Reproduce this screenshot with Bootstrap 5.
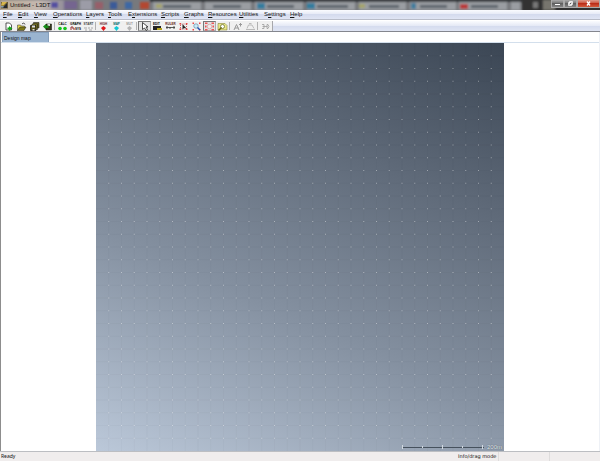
<!DOCTYPE html>
<html lang="en">
<head>
<meta charset="utf-8">
<meta name="viewport" content="width=device-width, initial-scale=1">
<title>Untitled - L3DT</title>
<link href="https://cdn.jsdelivr.net/npm/bootstrap@5.3.0/dist/css/bootstrap.min.css" rel="stylesheet">
<style>
body{font:5px/8px "Noto Sans","Open Sans",sans-serif;color:#111;background:#fff}
button{font:inherit;color:inherit;border:0;background:none;padding:0}
.caption{height:10px;background:#5a5b5e;overflow:hidden}
.caption-glass{left:0;top:0;width:100%;height:100%}
.caption-name{gap:2px;padding-left:1px}
.caption h1{font:6px/10px "Liberation Sans",Arial,sans-serif;color:#111}
.win-btn{height:8px;width:13px;border:1px solid #aaa;border-top:0;background:linear-gradient(#a9a9a9,#777 45%,#5f5f5f 50%,#858585);display:flex;align-items:center;justify-content:center}
.win-close{width:23px;background:linear-gradient(#dd9c8d,#cc5540 45%,#bb2d18 50%,#d25a3c)}
.menus{display:grid;grid-template-columns:15px 16px 19px 33px 22px 20px 33px 23px 24px 31px 25px 26px 20px;padding-left:3px;height:10px;background:linear-gradient(#fafbfe,#e6eaf6 45%,#d4dbee 50%,#e0e5f4);border-bottom:1px solid #b9bdc9}
.menus a{color:#111;text-decoration:none;font:6px/9px "Liberation Sans",Arial,sans-serif;white-space:nowrap}
.menus u{text-underline-offset:1px}
.tools{height:12px;background:linear-gradient(#fafbfe,#e6eaf6 45%,#d4dbee 50%,#e0e5f4);border-top:1px solid #fff;border-bottom:1px solid #84868e}
.strip{background:#f0f0f0;padding-left:2px;border-right:1px solid #a7a7ab}
.tool{width:13px;height:10px;display:flex;align-items:center;justify-content:center}
.tool svg{width:11px;height:9px;overflow:visible}
.tool text{font:bold 3px "Liberation Sans",Arial,sans-serif;text-anchor:middle}
.tool.pressed{background:#e2e2e2;border:1px solid #777;border-right-color:#aaa;border-bottom-color:#aaa}
.split{width:1px;height:8px;margin-right:1px;background:#b1b1b1}
.work{border-left:1px solid #8d8d8d;border-right:1px solid #eef1f6;min-height:0}
.tabs{height:11px;border-bottom:1px solid #d3dfec;padding-left:1px}
.map-tab{width:47px;background:#9ab4d0;border:1px solid #86a0bd;border-bottom:0;text-align:left;padding-left:1px;font-family:"Liberation Sans",Arial,sans-serif}
.canvas-area{min-height:0}
.design-map{height:100%;aspect-ratio:1;background:linear-gradient(204deg,#3b4654,#5f6a79 30%,#8490a0 62%,#bbc8d9)}
.tiles{width:100%;height:100%}
.scale-key{right:2px;bottom:1px;gap:3px;font:6px/6px "Liberation Sans",Arial,sans-serif;color:#e6ebf0;text-shadow:0 0 1px #26303b}
.scale-key svg{width:82px;height:6px}
.status{height:10px;background:#f0eded;border-top:1px solid #bcbec2;padding-left:1px}
.pane{width:51px;border-left:1px solid #dedcdc}
.mode{width:40px;font-family:"DejaVu Sans","Noto Sans",sans-serif;white-space:nowrap}
</style>
<script src="https://cdn.jsdelivr.net/npm/bootstrap@5.3.0/dist/js/bootstrap.bundle.min.js"></script>
</head>
<body class="d-flex flex-column vh-100 overflow-hidden m-0">
<header class="caption position-relative flex-shrink-0">
  <svg class="caption-glass position-absolute" viewBox="0 0 600 10" preserveAspectRatio="none" aria-hidden="true">
    <defs>
      <filter id="soft" x="-5%" y="-30%" width="110%" height="160%"><feGaussianBlur stdDeviation="1.3"/></filter>
      <linearGradient id="glow"><stop offset="0" stop-color="#b9a994"/><stop offset=".6" stop-color="#c5b8b0"/><stop offset="1" stop-color="#938f9a"/></linearGradient>
    </defs>
    <rect width="600" height="10" fill="#77797d"/>
    <g filter="url(#soft)">
      <rect width="64" height="12" fill="url(#glow)"/>
      <rect x="51" y="2" width="7" height="6" fill="#5450a0"/><rect x="64" y="1" width="13" height="8" fill="#756590"/>
      <rect x="80" width="12" height="10" fill="#9c9ca7"/><rect x="95" y="2" width="8" height="7" fill="#975f69"/>
      <rect x="110" y="2" width="7" height="7" fill="#3a5a99"/><rect x="125" y="2" width="7" height="7" fill="#3e68a4"/>
      <rect x="140" y="2" width="9" height="7" fill="#b34632"/>
      <g fill="#9a9da2"><rect x="153" y="2" width="48" height="8"/><rect x="205" y="2" width="46" height="8"/><rect x="255" y="2" width="48" height="8"/><rect x="307" y="2" width="48" height="8"/><rect x="359" y="2" width="47" height="8"/><rect x="410" y="2" width="46" height="8"/><rect x="459" y="2" width="48" height="8"/><rect x="511" y="2" width="9" height="8"/></g>
      <g fill="#5c636c"><rect x="163" y="5" width="28" height="3"/><rect x="213" y="5" width="28" height="3"/><rect x="267" y="5" width="27" height="3"/><rect x="317" y="5" width="31" height="3"/><rect x="369" y="5" width="30" height="3"/><rect x="420" y="5" width="27" height="3"/><rect x="471" y="5" width="27" height="3"/></g>
      <rect x="156" y="4" width="6" height="4" fill="#a6a56d"/><rect x="257" y="3" width="8" height="6" fill="#347d9e"/><rect x="307" y="3" width="8" height="6" fill="#347d9e"/><rect x="359" y="4" width="6" height="4" fill="#a6a56d"/><rect x="411" y="3" width="5" height="6" fill="#427d9d"/><rect x="460" y="4" width="8" height="5" fill="#b93a3a"/>
      <rect x="150" y="-2" width="372" height="4" fill="#34373b"/>
      <rect x="522" y="-2" width="80" height="14" fill="#333332"/><rect x="533" y="2" width="5" height="6" fill="#777"/><rect x="543" y="0" width="12" height="10" fill="#77756e"/>
    </g>
  </svg>
  <div class="position-relative d-flex justify-content-between">
    <div class="caption-name d-flex align-items-center">
      <svg width="7" height="8" viewBox="0 0 14 16" aria-hidden="true"><path fill="#665837" d="M0 2h14v13H0z"/><path fill="#d6b64c" d="M2 2h10L5 9H0z"/><path fill="#232730" d="m3 14 9-9v9z"/><path fill="#829db0" d="M0 10h5v3H0z"/></svg>
      <h1 class="m-0 text-nowrap">Untitled - L3DT</h1>
    </div>
    <div class="d-flex align-items-start">
      <button class="win-btn" aria-label="Minimize"><svg width="7" height="5"><path d="M1 3h5v1H1z" fill="#fff"/></svg></button>
      <button class="win-btn" aria-label="Restore"><svg width="7" height="5"><path d="M2.500.5h3v3h-3zM1.500 1.500h3v3h-3z" fill="none" stroke="#fff" stroke-width=".8"/></svg></button>
      <button class="win-btn win-close" aria-label="Close"><svg width="7" height="5"><path d="m2 .5 3 4m0-4-3 4" stroke="#fff" stroke-width="1.300"/></svg></button>
    </div>
  </div>
</header>
<nav class="menus flex-shrink-0" aria-label="Main menu">
  <a href="#"><u>F</u>ile</a><a href="#"><u>E</u>dit</a><a href="#"><u>V</u>iew</a><a href="#"><u>O</u>perations</a><a href="#"><u>L</u>ayers</a><a href="#"><u>T</u>ools</a><a href="#">E<u>x</u>tensions</a><a href="#"><u>S</u>cripts</a><a href="#"><u>G</u>raphs</a><a href="#"><u>R</u>esources</a><a href="#"><u>U</u>tilities</a><a href="#">S<u>e</u>ttings</a><a href="#"><u>H</u>elp</a>
</nav>
<div class="tools d-flex flex-shrink-0" role="toolbar" aria-label="Tools">
  <div class="strip d-flex align-items-center">
    <button class="tool" aria-label="New"><svg viewBox="0 0 22 18"><path d="M6 2h7l4 4v10H6z" fill="#fff" stroke="#222" stroke-width="1.500"/><path d="M12 8v3H9v4h3v3l7-5z" fill="#16a41c"/></svg></button>
    <button class="tool" aria-label="Open"><svg viewBox="0 0 22 18"><path d="M3 6h6l2 2h6v3H8l-5 6z" fill="#ddd24c" stroke="#333" stroke-width="1"/><path d="M8 10h12l-4 7H3z" fill="#7d7817" stroke="#222"/><path d="M12 4c3-3 5-2 6 1" fill="none" stroke="#222" stroke-width="1.500"/></svg></button>
    <button class="tool" aria-label="Save all"><svg viewBox="0 0 22 18"><path d="M9 1h11v11H9z" fill="#6b6722" stroke="#111"/><path d="M6 4h11v11H6z" fill="#8b862c" stroke="#111"/><path d="M3 7h11v10H3z" fill="#56521b" stroke="#111" stroke-width="1.500"/><path d="M6 7h6v4H6zM7 14h4v3H7z" fill="#ddd"/></svg></button>
    <button class="tool" aria-label="Import"><svg viewBox="0 0 22 18"><path d="M8 4h11v12H8z" fill="#35381a" stroke="#111"/><path d="M11 4h5v4h-5z" fill="#ddd"/><path d="M2 9l6-5v3h5v5H8v3z" fill="#168c18"/></svg></button>
    <span class="split"></span>
    <button class="tool"><svg viewBox="0 0 11 9"><text x="5.500" y="3">CALC</text><circle cx="3" cy="6.500" r="1.800" fill="#13c51a"/><circle cx="8" cy="6.500" r="1.800" fill="#13c51a"/></svg></button>
    <button class="tool"><svg viewBox="0 0 11 9"><text x="5.500" y="3">GRAPH</text><path d="M1 8V5h2v2h2" fill="none" stroke="#9a3333"/><text x="8" y="8">SYS</text></svg></button>
    <button class="tool"><svg viewBox="0 0 11 9"><text x="5.500" y="3" fill="#444">START</text><path d="M1 6h3m1 0h2m1 0h2M2 8h2m2 0h3" stroke="#aaa"/></svg></button>
    <span class="split"></span>
    <button class="tool"><svg viewBox="0 0 11 9"><text x="5.500" y="3" fill="#622">HIGH</text><path d="m3 6 2.500-2L8 6 5.500 9z" fill="#e0161b"/></svg></button>
    <button class="tool"><svg viewBox="0 0 11 9"><text x="5.500" y="3" fill="#086a6a">MAP</text><path d="m3 6 2.500-2L8 6 5.500 9z" fill="#10c9d5"/></svg></button>
    <button class="tool" disabled><svg viewBox="0 0 11 9"><text x="5.500" y="3" fill="#999">MUT</text><path d="m3 6 2.500-2L8 6 5.500 9z" fill="#b4b4b4"/></svg></button>
    <span class="split"></span>
    <button class="tool pressed" aria-label="Pointer"><svg viewBox="0 0 22 18"><path d="M7 1v14l4-3 3 5 3-2-3-5h4z" fill="#fff" stroke="#111" stroke-width="1.500"/></svg></button>
    <button class="tool"><svg viewBox="0 0 11 9"><text x="4.500" y="3">EDIT</text><path d="M1 4h8v4H1z" fill="#222"/><path d="M5 6h5v2H5z" fill="#b5a321"/></svg></button>
    <button class="tool"><svg viewBox="0 0 11 9"><text x="5.500" y="3" fill="#622">RULER</text><path d="M1 5.500h9M2 4v3m7-3v3m-4-2v2" stroke="#333" stroke-width=".8"/></svg></button>
    <button class="tool" aria-label="Select region"><svg viewBox="0 0 22 18"><path d="M3 2h3v3H3zm13 0h3v3h-3zM3 13h3v3H3zm13 0h3v3h-3z" fill="#e44"/><path d="M5 4h12v10H5z" fill="none" stroke="#b33" stroke-width="1.500" stroke-dasharray="2"/><path d="M9 4v11l3-3 5 1z" fill="#222"/></svg></button>
    <button class="tool" aria-label="Zoom region"><svg viewBox="0 0 22 18"><path d="M3 1h3v3H3zm13 0h3v3h-3zM3 14h3v3H3zm13 0h3v3h-3z" fill="#e44"/><circle cx="10" cy="8" r="4.500" fill="#c8eaf8" stroke="#468"/><path d="m13 11 5 5" stroke="#224cac" stroke-width="3"/></svg></button>
    <button class="tool pressed" aria-label="Zoom to fit"><svg viewBox="0 0 22 18"><path d="M2 1h5v3H2zm13 0h5v3h-5zM2 14h5v3H2zm13 0h5v3h-5zM2 7h3v4H2zm15 0h3v4h-3z" fill="#ec5555"/><circle cx="11" cy="9" r="4.500" fill="#eee" stroke="#c77"/></svg></button>
    <button class="tool" aria-label="Map zoom"><svg viewBox="0 0 22 18"><path d="M2 3h14l4 4v9H2z" fill="#e9e68b" stroke="#77751c"/><circle cx="11" cy="9" r="4" fill="#fff" stroke="#687127" stroke-width="1.500"/><path d="m9 11-6 6" stroke="#686714" stroke-width="3"/></svg></button>
    <span class="split"></span>
    <button class="tool" disabled aria-label="Raise"><svg viewBox="0 0 22 18"><path d="M4 16 9 5l5 11M6 12h7M14 5h6m-3-3v7" fill="none" stroke="#999" stroke-width="2"/></svg></button>
    <button class="tool" disabled aria-label="Flatten"><svg viewBox="0 0 22 18"><path d="M2 15h18M4 13l3-7h7l4 7M8 3h5" fill="none" stroke="#aaa" stroke-width="1.500"/></svg></button>
    <span class="split"></span>
    <button class="tool" disabled aria-label="3D view"><svg viewBox="0 0 22 18"><path d="M4 5h4v8H4m1-4h10m-1-4h2q4 4 0 8h-2z" fill="none" stroke="#999" stroke-width="1.500"/></svg></button>
  </div>
</div>
<main class="work d-flex flex-column flex-grow-1">
  <div class="tabs d-flex flex-shrink-0"><button class="map-tab">Design map</button></div>
  <div class="canvas-area flex-grow-1 d-flex justify-content-center">
    <div class="design-map position-relative">
      <svg class="tiles d-block" viewBox="0 0 32 32" preserveAspectRatio="none" role="img" aria-label="Height map grid">
        <g id="grid"></g>
      </svg>
      <div class="scale-key position-absolute d-flex align-items-center">
        <svg viewBox="0 0 82 6"><path d="M0 3.500h82" stroke="#46515d"/><path d="M.5 1v4m20-3v2m20-3v4m20-3v2m20-3v4" stroke="#d3dae1"/></svg>
        <span>200m</span>
      </div>
    </div>
  </div>
</main>
<footer class="status d-flex flex-shrink-0">
  <span class="flex-grow-1">Ready</span><span class="mode">Info/drag mode</span><span class="pane"></span><span class="pane"></span>
</footer>
<script>
// Faint tile edges and one white point on every interior grid crossing.
let lines = '', dots = '';
for (let a = 1; a < 32; a++) {
  lines += `M${a} 0V32M0 ${a}H32`;
  for (let b = 1; b < 32; b++) dots += `M${a - .04} ${b - .04}h.08v.08h-.08z`;
}
document.getElementById('grid').innerHTML =
  `<path d="${lines}" stroke="#202c3a" stroke-opacity=".025" stroke-width=".08"/><path d="${dots}" fill="#fff" fill-opacity=".42"/>`;
</script>
</body>
</html>
